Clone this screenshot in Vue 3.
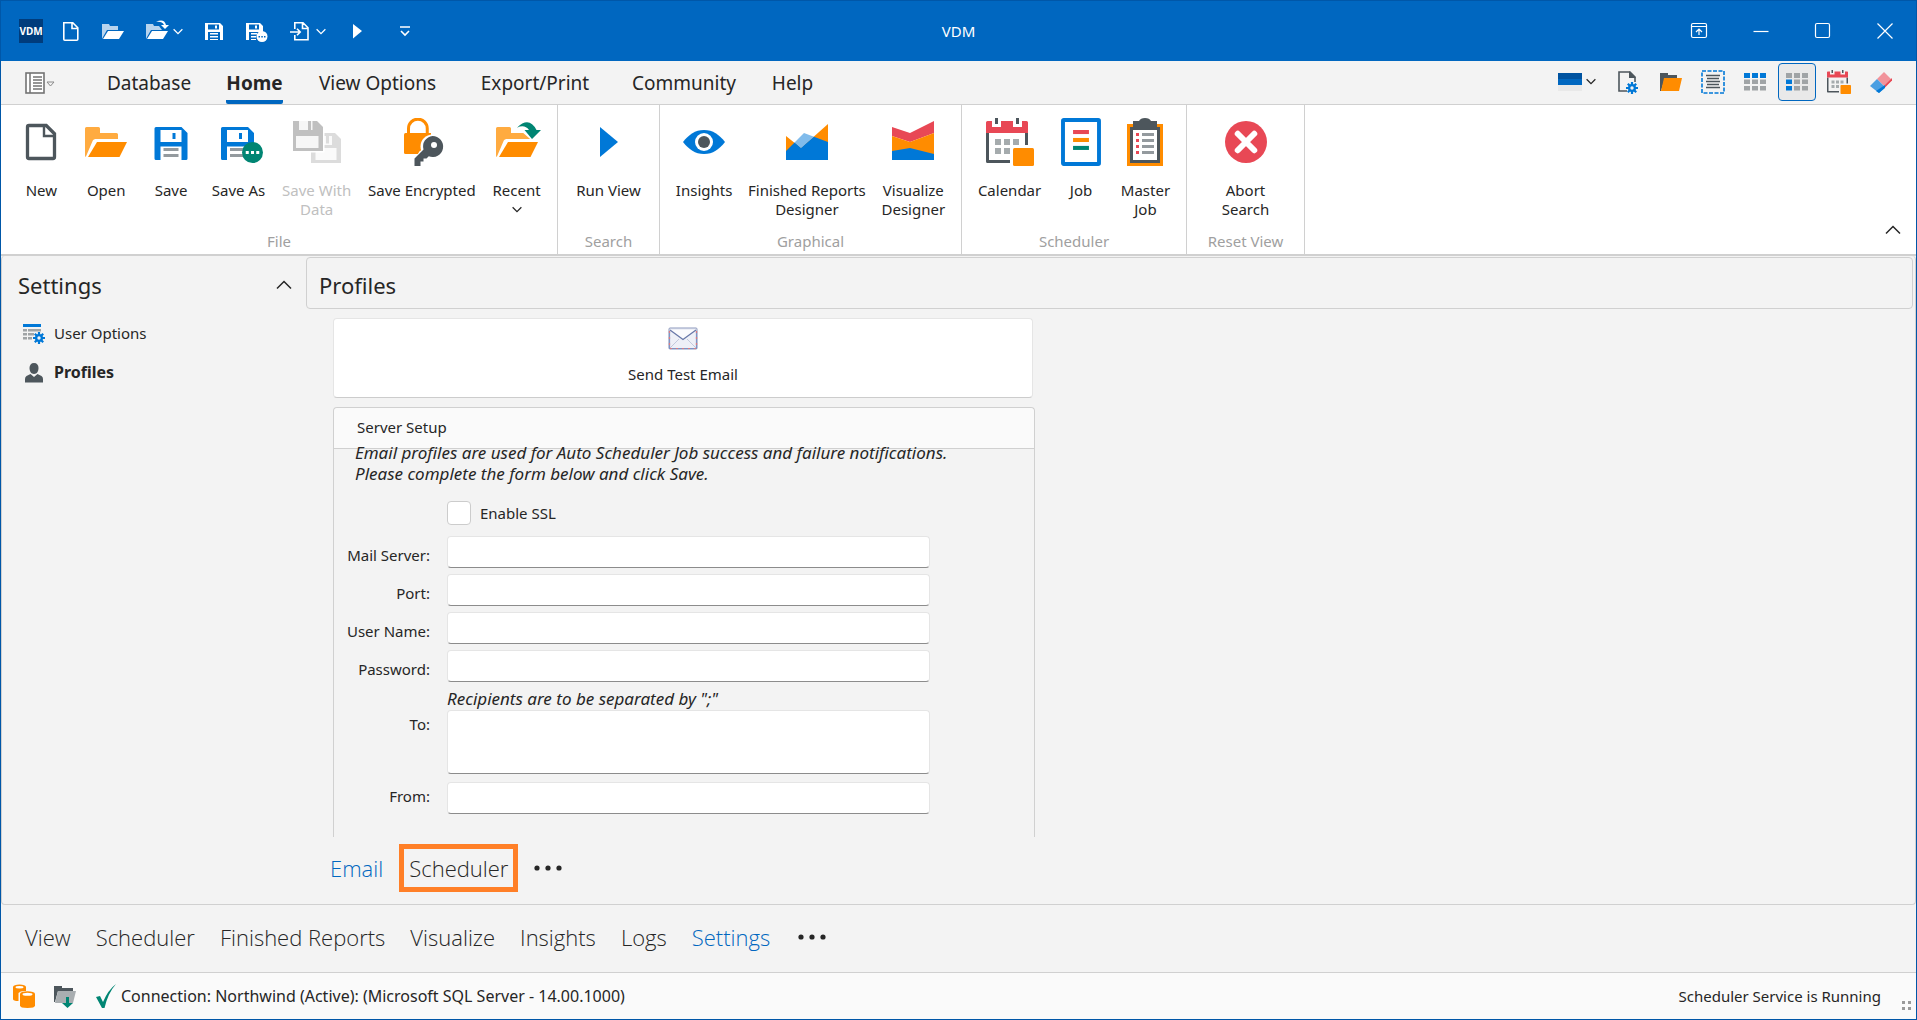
<script setup>
import { ref } from 'vue'

const tabs = [
  { label: 'Database', width: 118 },
  { label: 'Home', width: 93, active: true },
  { label: 'View Options', width: 153 },
  { label: 'Export/Print', width: 162 },
  { label: 'Community', width: 136 },
  { label: 'Help', width: 81 },
]

const groups = [
  {
    name: 'File',
    width: 557,
    items: [
      { lines: ['New'], icon: 'new' },
      { lines: ['Open'], icon: 'open' },
      { lines: ['Save'], icon: 'save' },
      { lines: ['Save As'], icon: 'save-as' },
      { lines: ['Save With', 'Data'], icon: 'save-data', disabled: true },
      { lines: ['Save Encrypted'], icon: 'encrypted' },
      { lines: ['Recent'], icon: 'recent', menu: true },
    ],
  },
  { name: 'Search', width: 102, items: [{ lines: ['Run View'], icon: 'run' }] },
  {
    name: 'Graphical',
    width: 302,
    items: [
      { lines: ['Insights'], icon: 'eye' },
      { lines: ['Finished Reports', 'Designer'], icon: 'report' },
      { lines: ['Visualize', 'Designer'], icon: 'visualize' },
    ],
  },
  {
    name: 'Scheduler',
    width: 225,
    items: [
      { lines: ['Calendar'], icon: 'calendar' },
      { lines: ['Job'], icon: 'job' },
      { lines: ['Master', 'Job'], icon: 'master' },
    ],
  },
  { name: 'Reset View', width: 118, items: [{ lines: ['Abort', 'Search'], icon: 'abort' }] },
]

const tools = [
  { icon: 'page-gear', label: 'Page settings' },
  { icon: 'folder', label: 'Folder' },
  { icon: 'select-list', label: 'Select all' },
  { icon: 'grid-top', label: 'Header row' },
  { icon: 'grid-left', label: 'First column', active: true },
  { icon: 'calendar', label: 'Calendar' },
  { icon: 'eraser', label: 'Clear' },
]

const sections = ['View', 'Scheduler', 'Finished Reports', 'Visualize', 'Insights', 'Logs', 'Settings']

const fields = [
  { id: 'server', label: 'Mail Server:', type: 'text' },
  { id: 'port', label: 'Port:', type: 'text' },
  { id: 'user', label: 'User Name:', type: 'text' },
  { id: 'password', label: 'Password:', type: 'password' },
]

const form = ref({ ssl: false, server: '', port: '', user: '', password: '', to: '', from: '' })
</script>

<template>
  <div class="window">
    <svg class="sprite" aria-hidden="true">
      <symbol id="new" viewBox="0 0 32 32">
        <path d="M8 5h11.500l5.500 5.500V26a1 1 0 0 1-1 1H8a1 1 0 0 1-1-1V6a1 1 0 0 1 1-1z" fill="none" stroke="#4d565c" stroke-width="2.200" />
        <path d="M18 5v7h7" fill="none" stroke="#4d565c" stroke-width="1.600" />
      </symbol>
      <symbol id="open" viewBox="0 0 32 32">
        <path d="M3 6h8a1 1 0 0 1 1 1v3h11a1 1 0 0 1 1 1v3H9a2 2 0 0 0-1.800 1L2.500 26H3a1 1 0 0 1-1-1V7a1 1 0 0 1 1-1z" fill="#ffab40" />
        <path d="M10 16h20l-5 10H4z" fill="#ff8c00" />
      </symbol>
      <symbol id="save" viewBox="0 0 32 32">
        <path d="M6 6h17l4 4v17a1 1 0 0 1-1 1h-3v-9H9v9H6a1 1 0 0 1-1-1V7a1 1 0 0 1 1-1zm3 2v8h14V8z" fill="#0078d7" fill-rule="evenodd" />
        <path d="M17 10h2v4h-2z" fill="#0078d7" />
        <path d="M11 20h10v2H11zM11 24h10v2H11z" fill="#949a9e" />
      </symbol>
      <symbol id="save-as" viewBox="0 0 32 32">
        <path d="M5 6h17l4 4v17a1 1 0 0 1-1 1h-3v-9H8v9H5a1 1 0 0 1-1-1V7a1 1 0 0 1 1-1zm3 2v8h14V8z" fill="#0078d7" fill-rule="evenodd" />
        <path d="M16 10h2v4h-2z" fill="#0078d7" />
        <path d="M10 20h10v2H10zM10 24h10v2H10z" fill="#949a9e" />
        <circle cx="25" cy="23" r="7" fill="#008573" />
        <path d="M20.500 22h2v2h-2zM24 22h2v2h-2zM27.500 22h2v2h-2z" fill="#fff" />
      </symbol>
      <symbol id="save-data" viewBox="0 0 32 32">
        <path d="M12 10h16l4 4v16H12z" fill="#dcdcdc" />
        <path d="M15 20h14v8H15zM16 12h10v6H16z" fill="#fafafa" />
        <path d="M22 12h2v5h-2z" fill="#dcdcdc" />
        <path d="M0 1h17l4 4v18H0z" fill="#fff" />
        <path d="M0 2h16l4 4v16H0z" fill="#c0c0c0" />
        <path d="M2 12h15v8H2zM4 2h9v6H4z" fill="#f6f6f6" />
        <path d="M10 2h2v6h-2z" fill="#c0c0c0" />
      </symbol>
      <symbol id="encrypted" viewBox="0 0 32 32">
        <path d="M7 11V7a6 6 0 0 1 12.500 0v4" fill="none" stroke="#ff8c00" stroke-width="2" />
        <path d="M5 10h17v14H5a1 1 0 0 1-1-1V11a1 1 0 0 1 1-1z" fill="#ff8c00" />
        <circle cx="23" cy="19" r="8" fill="#fff" />
        <path d="M14.500 22l4-2 2 5-8 6v-6z" fill="#fff" />
        <path d="M23 12a7 7 0 1 1-2.500 13.500L19 27h-2v2h-2v3h-4v-5l6-6A7 7 0 0 1 23 12z" fill="#4d565c" />
        <circle cx="24" cy="18" r="2" fill="#fff" />
      </symbol>
      <symbol id="recent" viewBox="0 0 32 32">
        <path d="M3 6h8a1 1 0 0 1 1 1v3h9l4 4H9a2 2 0 0 0-1.800 1L2.500 26H3a1 1 0 0 1-1-1V7a1 1 0 0 1 1-1z" fill="#ffab40" />
        <path d="M10 16h20l-5 10H4z" fill="#ff8c00" />
        <path d="M15 9l2-4 4-2 8 5h3l-6 7-7-6z" fill="#fff" />
        <path d="M16 6.500q8-8 13 1.500h3l-6 6-5-6h3q-3-4-8-1.500z" fill="#008573" />
      </symbol>
      <symbol id="run" viewBox="0 0 32 32"><path d="M10 6l12 10-12 10z" fill="#0078d7" /></symbol>
      <symbol id="eye" viewBox="0 0 32 32">
        <path d="M2 16c4-5 8-8 14-8s10 3 14 8c-4 5-8 8-14 8S6 21 2 16z" fill="#0078d7" />
        <circle cx="16" cy="16" r="6" fill="#fff" /><circle cx="16" cy="16" r="4" fill="#4d565c" />
      </symbol>
      <symbol id="report" viewBox="0 0 32 32">
        <path d="M2 12l10 8L30 4v24H2z" fill="#ff8c00" />
        <path d="M7.700 16.300L14 10l6.600 2.500L12 20z" fill="#80bbeb" />
        <path d="M2 22l5.700-5.700L12 20l8.600-7.500L30 16v12H2z" fill="#0078d7" />
      </symbol>
      <symbol id="visualize" viewBox="0 0 32 32">
        <path d="M2 6l12 4 16-8v8l-16 6-12-4z" fill="#e84855" />
        <path d="M2 12l12 4 16-6v16H2z" fill="#ff8c00" />
        <path d="M2 22l12-2 16 4v4H2z" fill="#0078d7" />
      </symbol>
      <symbol id="calendar" viewBox="0 0 32 32">
        <path d="M0 10h2v18h14v2H1a1 1 0 0 1-1-1zM26 10h2v8h-2z" fill="#4d565c" />
        <path d="M1 2h3v4h6V2h8v4h6V2h3a1 1 0 0 1 1 1v7H0V3a1 1 0 0 1 1-1z" fill="#e84855" />
        <path d="M6 0h2v4H6zM20 0h2v4h-2z" fill="#4d565c" />
        <path d="M6 14h4v4H6zM12 14h4v4h-4zM18 14h4v4h-4zM6 20h4v4H6zM12 20h4v4h-4z" fill="#a5abad" />
        <rect x="18" y="20" width="14" height="12" rx="1" fill="#ff8c00" />
      </symbol>
      <symbol id="job" viewBox="0 0 32 32">
        <rect x="4" y="1.300" width="24" height="29.400" rx=".5" fill="#fff" stroke="#0078d7" stroke-width="2.600" />
        <path d="M10.700 8h10.600v2.700H10.700z" fill="#e84855" />
        <path d="M10.700 13.300h10.600V16H10.700z" fill="#ff8c00" />
        <path d="M10.700 18.600h10.600v2.700H10.700z" fill="#008573" />
      </symbol>
      <symbol id="master" viewBox="0 0 32 32">
        <path d="M4 4h24v28H4z" fill="#ff8c00" />
        <path d="M6 6h20v24H6z" fill="#4d565c" />
        <path d="M8 8h16v20H8z" fill="#fff" />
        <path d="M8 2h4q1-2 4-2t4 2h4v6H8z" fill="#4d565c" />
        <path d="M10 10h2v2h-2zM10 14h2v2h-2zM10 18h2v2h-2zM10 22h2v2h-2z" fill="#e84855" />
        <path d="M14 10h8v2h-8zM14 14h8v2h-8zM14 18h8v2h-8zM14 22h8v2h-8z" fill="#949a9e" />
      </symbol>
      <symbol id="abort" viewBox="0 0 32 32">
        <circle cx="16" cy="16" r="14" fill="#e84855" />
        <path d="M10.500 10.500l11 11M21.500 10.500l-11 11" stroke="#fff" stroke-width="4" stroke-linecap="round" />
      </symbol>
      <symbol id="gear" viewBox="0 0 12 12">
        <path d="M6 0v12M0 6h12M1.800 1.800l8.400 8.400M10.200 1.800l-8.400 8.400" stroke="#0078d7" stroke-width="2.200" />
        <circle cx="6" cy="6" r="4" fill="#0078d7" /><circle cx="6" cy="6" r="1.700" fill="#f3f3f3" />
      </symbol>
      <symbol id="page-gear" viewBox="0 0 24 24">
        <path d="M10 21H2V2h11l5 5v5" fill="none" stroke="#4d565c" stroke-width="1.600" />
        <path d="M12 1l7 7h-7z" fill="#4d565c" />
        <use href="#gear" x="9" y="12" width="12" height="12" />
      </symbol>
      <symbol id="folder" viewBox="0 0 24 24">
        <path d="M1 3h8v2h9v3H6L2 21H1z" fill="#4d565c" />
        <path d="M5 8h18l-3 13H2z" fill="#ff8c00" />
      </symbol>
      <symbol id="select-list" viewBox="0 0 24 24">
        <rect x="1" y="1" width="22" height="22" fill="none" stroke="#0078d7" stroke-width="1.600" stroke-dasharray="4 1.500" />
        <path d="M5 5.500h14M6 8.500h12M5 11.500h14M6 14.500h12M5 17.500h14" stroke="#4d565c" stroke-width="1.400" />
      </symbol>
      <symbol id="grid-top" viewBox="0 0 24 24">
        <path d="M1 3h6v5H1zM9 3h6v5H9zM17 3h6v5h-6z" fill="#0078d7" />
        <path d="M1 9.500h6v4.500H1zM9 9.500h6v4.500H9zM17 9.500h6v4.500h-6zM1 16h6v4.500H1zM9 16h6v4.500H9zM17 16h6v4.500h-6z" fill="#a0a4a6" />
      </symbol>
      <symbol id="grid-left" viewBox="0 0 24 24">
        <path d="M1 3h6v5H1zM9 3h6v5H9zM17 3h6v5h-6zM9 9.500h6v4.500H9zM17 9.500h6v4.500h-6zM9 16h6v4.500H9zM17 16h6v4.500h-6z" fill="#a0a4a6" />
        <path d="M1 9.500h6v4.500H1zM1 16h6v4.500H1z" fill="#0078d7" />
      </symbol>
      <symbol id="eraser" viewBox="0 0 24 24">
        <path d="M15 2l8 8-7 7-8-8z" fill="#f1939b" />
        <path d="M23 8v2.500l-7 7V15z" fill="#e84855" />
        <path d="M8 9l8 8-6 6-9-7z" fill="#4a9fe2" />
        <path d="M16 15v3l-6 5-3-2z" fill="#0078d7" />
      </symbol>
      <symbol id="options" viewBox="0 0 24 24">
        <path d="M1 2h18v3H1z" fill="#0078d7" />
        <path d="M1 7h4v2.500H1zM6 7h13v2.500H6zM1 11h4v2.500H1zM6 11h6v2.500H6zM1 15h4v2.500H1zM6 15h4v2.500H6z" fill="#a0a4a6" />
        <use href="#gear" x="11" y="10" width="12" height="12" />
      </symbol>
      <symbol id="person" viewBox="0 0 24 24">
        <path d="M12 2c3 0 4.500 2 4.500 5 0 3-1.500 6-4.500 6S7.500 10 7.500 7c0-3 1.500-5 4.500-5z" fill="#4d565c" />
        <path d="M8.500 13l3.500 3 3.500-3 4 2q1.500 .800 1.500 3v3.500H3V18q0-2.200 1.500-3z" fill="#4d565c" />
      </symbol>
      <symbol id="chevron" viewBox="0 0 16 10"><path d="M1 1.500L8 8.500l7-7" fill="none" stroke="currentColor" stroke-width="2" /></symbol>
      <symbol id="chevron-up" viewBox="0 0 16 10"><path d="M1 8.500L8 1.500l7 7" fill="none" stroke="currentColor" stroke-width="1.500" /></symbol>
      <symbol id="q-new" viewBox="0 0 24 24"><path d="M4.800 3.800h9l5 5v11.400a1 1 0 0 1-1 1h-12a1 1 0 0 1-1-1zM13 4v5.500h5.500" fill="none" stroke="#fff" stroke-width="1.600" /></symbol>
      <symbol id="q-open" viewBox="0 0 24 24">
        <path d="M1 5h7l1 2h8v4H6L2 18l-1 2z" fill="#b8d4ee" /><path d="M7 12h16l-5 8H2z" fill="#fff" />
      </symbol>
      <symbol id="q-recent" viewBox="0 0 24 24">
        <path d="M1 5h7l1 2h5l3 4H6L2 18l-1 2z" fill="#b8d4ee" /><path d="M7 12h16l-5 8H2z" fill="#fff" />
        <path d="M11 3q8-4 10 3h3l-4 4-4-4h3q-2-4-8-3z" fill="#fff" />
      </symbol>
      <symbol id="q-save" viewBox="0 0 24 24">
        <path d="M3 4h15l3 3v14h-3v-8H6v8H3zm3 1.500v5h11v-5z" fill="#fff" fill-rule="evenodd" /><path d="M13 6.500h2v3h-2zM8 14h8v1.500H8zM8 17h8v1.500H8zM8 20h8v1H8z" fill="#fff" />
      </symbol>
      <symbol id="q-save-as" viewBox="0 0 24 24">
        <path d="M2 4h14l3 3v7h-3v-1H5v8H2zm3 1.500v5h10v-5z" fill="#fff" fill-rule="evenodd" /><path d="M11 6.500h2v3h-2zM7 14h6v1.500H7zM7 17h5v1.500H7zM7 20h5v1H7z" fill="#fff" />
        <circle cx="18" cy="17.500" r="5.500" fill="#fff" /><path d="M14.500 17h1.500v1.500h-1.500zM17.300 17h1.500v1.500h-1.500zM20 17h1.500v1.500H20z" fill="#0067c0" />
      </symbol>
      <symbol id="q-export" viewBox="0 0 24 24">
        <path d="M6.800 10V3.800H15l5 5v12H6.800V16M14.500 4v5.500h5.200M2 13h10M9 9.800l3.200 3.200L9 16.200" fill="none" stroke="#fff" stroke-width="1.600" />
      </symbol>
      <symbol id="q-run" viewBox="0 0 24 24"><path d="M8 5l9 7-9 7.500z" fill="#fff" /></symbol>
      <symbol id="q-more" viewBox="0 0 24 24"><path d="M7 8h10M8 12l4 4 4-4" fill="none" stroke="#fff" stroke-width="1.600" /></symbol>
      <symbol id="database" viewBox="0 0 24 24">
        <path d="M1 3v12q0 2 5.500 2V9q2-2.500 7.500-2V3z" fill="#ff8c00" /><ellipse cx="7.500" cy="3" rx="6.500" ry="2.500" fill="#ff8c00" /><ellipse cx="7.500" cy="3.200" rx="4" ry="1.200" fill="#fff" />
        <path d="M8 10v11.500q0 2.500 7.500 2.500t7.500-2.500V10z" fill="#ff8c00" /><ellipse cx="15.500" cy="10" rx="7.500" ry="2.700" fill="#ff8c00" /><ellipse cx="15.500" cy="10.300" rx="5" ry="1.500" fill="#fff" />
      </symbol>
      <symbol id="folder-down" viewBox="0 0 24 24">
        <path d="M1 2h8v2h11v3H5L2 18H1z" fill="#4d565c" /><path d="M5 7h18l-3 12H2z" fill="#a9aeb1" />
        <path d="M13 13h3v6h4l-5.500 5-5.500-5h4z" fill="#008573" />
      </symbol>
      <symbol id="check" viewBox="0 0 24 24"><path d="M2 13l4-1 3 6Q14 6 22 0 14 9 10.500 24H8z" fill="#008573" /></symbol>
      <symbol id="dots" viewBox="0 0 28 6"><circle cx="3" cy="3" r="2.600" /><circle cx="14" cy="3" r="2.600" /><circle cx="25" cy="3" r="2.600" /></symbol>
    </svg>

    <header class="titlebar">
      <div class="quick">
        <span class="logo">VDM</span>
        <button aria-label="New"><svg><use href="#q-new" /></svg></button>
        <button aria-label="Open"><svg><use href="#q-open" /></svg></button>
        <button class="split" aria-label="Recent"><svg><use href="#q-recent" /></svg><svg class="caret"><use href="#chevron" /></svg></button>
        <button aria-label="Save"><svg><use href="#q-save" /></svg></button>
        <button aria-label="Save As"><svg><use href="#q-save-as" /></svg></button>
        <button class="split" aria-label="Export"><svg><use href="#q-export" /></svg><svg class="caret"><use href="#chevron" /></svg></button>
        <button aria-label="Run"><svg><use href="#q-run" /></svg></button>
        <button aria-label="Customize"><svg><use href="#q-more" /></svg></button>
      </div>
      <h1>VDM</h1>
      <div class="controls">
        <button aria-label="Ribbon display"><svg viewBox="0 0 18 18"><rect x="1.500" y="1.500" width="15" height="14" rx="1.500" /><path d="M1.500 4.500h15M9 13V7.500M6 10l3-3 3 3" /></svg></button>
        <button aria-label="Minimize"><svg viewBox="0 0 18 18"><path d="M1.500 9.500h15" /></svg></button>
        <button aria-label="Maximize"><svg viewBox="0 0 18 18"><rect x="1.500" y="1.500" width="14" height="14" rx="1.500" /></svg></button>
        <button aria-label="Close"><svg viewBox="0 0 18 18"><path d="M1.500 1.500l15 15M16.500 1.500l-15 15" /></svg></button>
      </div>
    </header>

    <nav class="tabs">
      <button class="file-menu" aria-label="File menu">
        <svg viewBox="0 0 32 22"><rect x="1" y="1" width="18" height="20" fill="#fff" stroke="#737373" stroke-width="1.600" /><path d="M5 1v20" stroke="#737373" stroke-width="1.500" /><path d="M8 5h9M8 8h9M8 11h9M8 14h9M8 17h9" stroke="#737373" stroke-width="1.300" /><path d="M22 10h7l-3.500 4z" fill="none" stroke="#8a8a8a" /></svg>
      </button>
      <button v-for="t in tabs" :key="t.label" class="tab" :class="{ active: t.active }" :style="{ width: t.width + 'px' }"><span>{{ t.label }}</span></button>
      <div class="tools">
        <button class="theme" aria-label="Theme">
          <svg class="swatch" viewBox="0 0 24 18"><path d="M0 0h24v6H0z" fill="#0053a0" /><path d="M0 6h24v6H0z" fill="#0067c0" /><path d="M0 12h24v6H0z" fill="#e9e9e9" /></svg>
          <svg class="caret"><use href="#chevron" /></svg>
        </button>
        <button v-for="t in tools" :key="t.icon" class="tool" :class="{ active: t.active }" :aria-label="t.label"><svg><use :href="'#' + t.icon" /></svg></button>
      </div>
    </nav>

    <section class="ribbon">
      <div v-for="g in groups" :key="g.name" class="group" :style="{ width: g.width + 'px' }">
        <div class="items">
          <button v-for="i in g.items" :key="i.icon" class="item" :disabled="i.disabled">
            <svg class="big"><use :href="'#' + i.icon" /></svg>
            <span v-for="l in i.lines" :key="l">{{ l }}</span>
            <svg v-if="i.menu" class="caret"><use href="#chevron" /></svg>
          </button>
        </div>
        <div class="group-name">{{ g.name }}</div>
      </div>
      <button class="collapse" aria-label="Collapse ribbon"><svg><use href="#chevron-up" /></svg></button>
    </section>

    <main class="page">
      <aside>
        <div class="aside-head"><h2>Settings</h2><button aria-label="Collapse"><svg><use href="#chevron-up" /></svg></button></div>
        <a href="#options"><svg><use href="#options" /></svg>User Options</a>
        <a href="#profiles" class="current"><svg><use href="#person" /></svg>Profiles</a>
      </aside>
      <div class="content">
        <h2 class="content-head">Profiles</h2>
        <button class="send">
          <svg viewBox="0 0 30 23"><rect x="1" y="1" width="28" height="21" rx="1" fill="#eef0f7" stroke="#8c98bd" /><path d="M2 21l9-9M28 21l-9-9" stroke="#c3c9dc" /><path d="M2 3l13 9.500L28 3" fill="#fbfbfd" stroke="#6878a8" stroke-width="1.300" /><path d="M1.500 4v17.500h27V4" fill="none" stroke="#7f93c4" stroke-width="1.200" /><path d="M1.500 4v17.500h27V4" fill="none" stroke="#dc7b80" stroke-width="1.200" stroke-dasharray="2 4" /></svg>
          <span>Send Test Email</span>
        </button>
        <form class="setup" @submit.prevent>
          <h3>Server Setup</h3>
          <p class="note">Email profiles are used for Auto Scheduler Job success and failure notifications.<br />Please complete the form below and click Save.</p>
          <label class="ssl"><input v-model="form.ssl" type="checkbox" />Enable SSL</label>
          <div v-for="f in fields" :key="f.id" class="field">
            <label :for="f.id">{{ f.label }}</label><input :id="f.id" v-model="form[f.id]" :type="f.type" />
          </div>
          <p class="hint">Recipients are to be separated by ";"</p>
          <div class="field raised"><label for="to">To:</label><textarea id="to" v-model="form.to"></textarea></div>
          <div class="field raised"><label for="from">From:</label><input id="from" v-model="form.from" type="text" /></div>
        </form>
        <nav class="subtabs">
          <a href="#email" class="current">Email</a>
          <a href="#scheduler" class="marked">Scheduler</a>
          <button aria-label="More"><svg><use href="#dots" /></svg></button>
        </nav>
      </div>
    </main>

    <nav class="sections">
      <a v-for="s in sections" :key="s" :href="'#' + s.toLowerCase().replace(' ', '-')" :class="{ current: s === 'Settings' }">{{ s }}</a>
      <button aria-label="More"><svg><use href="#dots" /></svg></button>
    </nav>

    <footer class="status">
      <svg><use href="#database" /></svg><svg><use href="#folder-down" /></svg><svg class="ok"><use href="#check" /></svg>
      <span class="connection">Connection: Northwind (Active): (Microsoft SQL Server - 14.00.1000)</span>
      <span class="service">Scheduler Service is Running</span>
      <svg class="grip" viewBox="0 0 10 10"><path d="M0 0h3v3H0zM6 0h3v3H6zM0 6h3v3H0zM6 6h3v3H6z" fill="#9a9a9a" /></svg>
    </footer>
  </div>
</template>

<style>
body { margin: 0; background: #f3f3f3; }
</style>

<style scoped>
* { box-sizing: border-box; }
.window { display: flex; flex-direction: column; min-height: 100vh; border: 1px solid #0057a8; background: #f3f3f3; color: #262626; font: 15px/19px "Noto Sans", "Open Sans", sans-serif; }
.sprite { position: absolute; width: 0; height: 0; }
svg { display: block; flex: none; }
button { display: flex; align-items: center; justify-content: center; margin: 0; padding: 0; border: 0; background: none; color: inherit; font: inherit; }
a { color: inherit; text-decoration: none; }
h1, h2, h3, p { margin: 0; font-weight: 400; }
.caret { width: 10px; height: 7px; }

.titlebar { display: grid; grid-template-columns: 1fr auto 1fr; align-items: center; height: 60px; background: #0067c0; color: #fff; }
.titlebar h1 { font-size: 15px; }
.quick { display: flex; align-items: center; padding-left: 18px; }
.logo { width: 24px; height: 24px; margin-right: 7px; background: #003c7c; font: 700 10px/24px "Noto Sans", sans-serif; text-align: center; }
.quick button { width: 42px; height: 42px; }
.quick .split { width: 59px; gap: 4px; }
.quick button svg:first-child { width: 24px; height: 24px; }
.quick button:last-child { margin-left: 6px; }
.controls { display: flex; justify-content: flex-end; }
.controls button { width: 62px; height: 60px; }
.controls svg { width: 18px; height: 18px; fill: none; stroke: #fff; stroke-width: 1.2; }

.tabs { display: flex; height: 44px; border-bottom: 1px solid #d0d0d0; font-size: 19px; line-height: 26px; }
.file-menu { width: 89px; padding-left: 24px; justify-content: flex-start; }
.file-menu svg { width: 32px; height: 22px; }
.tab span { height: 43px; padding-top: 9px; border-bottom: 4px solid transparent; border-radius: 2px; white-space: nowrap; }
.active span { border-color: #0067c0; font-weight: 700; }
.tools { display: flex; gap: 4px; align-items: center; margin-left: auto; padding: 0 16px 2px 0; }
.tool { width: 38px; height: 38px; border-radius: 4px; }
.tool svg { width: 24px; height: 24px; }
.tool.active { border: 1px solid #0067c0; background: #e9e9e9; }
.theme { gap: 4px; margin-right: 10px; }
.swatch { width: 24px; height: 18px; }

.ribbon { display: flex; height: 151px; border-bottom: 2px solid #d0d0d0; background: #fff; }
.group { display: flex; flex: none; flex-direction: column; justify-content: space-between; padding: 13px 8px 3px; border-right: 1px solid #d0d0d0; }
.items { display: flex; justify-content: center; }
.item { flex: 1 1 auto; flex-direction: column; justify-content: flex-start; min-width: 63px; padding: 0 7px; white-space: nowrap; }
.item:disabled { color: #c0c0c0; }
.big { width: 48px; height: 48px; margin-bottom: 15px; }
.item .caret { margin-top: 6px; }
.group-name { color: #a0a0a0; text-align: center; }
.collapse { align-self: flex-end; width: 40px; height: 48px; margin: 0 3px 0 auto; }
.collapse svg, .aside-head svg { width: 16px; height: 10px; }

.page { display: flex; flex: 1; border: 1px solid #d0d0d0; border-top: 0; border-radius: 4px; }
aside { width: 304px; flex: none; }
.aside-head { display: flex; align-items: center; justify-content: space-between; height: 58px; padding: 0 14px 0 16px; }
h2 { font-size: 22px; line-height: 30px; }
aside a { display: flex; align-items: center; gap: 8px; height: 39px; padding-left: 20px; }
aside a svg { width: 24px; height: 24px; }
aside .current { font-size: 16px; font-weight: 700; }
.content { display: flex; flex: 1; flex-direction: column; }
.content-head { height: 52px; margin: 1px 2px 9px 0; padding: 12px; border: 1px solid #d0d0d0; border-radius: 4px; }
.send { flex-direction: column; gap: 15px; width: 700px; height: 80px; margin-left: 27px; padding-bottom: 5px; border: 1px solid #e5e5e5; border-bottom-color: #ccc; border-radius: 4px; background: #fff; }
.send svg { width: 30px; height: 23px; }
.setup { display: flex; flex: 1; flex-direction: column; gap: 6px; width: 702px; margin: 9px 0 0 27px; padding-bottom: 21px; border: 1px solid #d0d0d0; border-bottom: 0; border-radius: 4px 4px 0 0; }
h3 { height: 41px; padding: 10px 23px; border-bottom: 1px solid #d0d0d0; border-radius: 4px 4px 0 0; background: #fafafa; font-size: 15px; }
.note, .hint { font-size: 17px; font-style: italic; line-height: 21px; }
.note { margin: -13px 0 11px; padding-left: 21px; }
.ssl { display: flex; align-items: center; gap: 9px; margin: 0 0 5px 113px; }
input, textarea { width: 483px; height: 32px; margin: 0; padding: 4px 8px; border: 1px solid #e5e5e5; border-bottom-color: #8c8c8c; border-radius: 4px; background: #fff; font: inherit; resize: none; }
.ssl input { width: 24px; height: 24px; border-color: #ccc; appearance: none; }
.field { display: flex; gap: 17px; }
.field label { width: 96px; padding-top: 10px; text-align: right; white-space: nowrap; }
.raised label { padding-top: 5px; }
.hint { margin: 0 0 -5px 113px; }
textarea { height: 64px; margin-bottom: 2px; }

.subtabs, .sections { display: flex; align-items: center; font: 300 22px/30px "Open Sans", "Noto Sans", sans-serif; }
.subtabs { gap: 16px; height: 67px; padding: 0 0 5px 24px; }
.sections { gap: 25px; height: 67px; padding: 0 0 3px 24px; }
.sections .current, .subtabs .current { color: #0067c0; }
.marked { padding: 4px 5px; border: 5px solid #ff7f27; }
.subtabs svg, .sections svg { width: 28px; height: 6px; fill: #262626; }
.sections button { margin-left: 3px; }

.status { display: flex; align-items: center; height: 47px; padding: 0 4px 0 11px; border-top: 1px solid #d0d0d0; background: #fafafa; }
.status svg { width: 24px; height: 24px; margin-right: 17px; }
.status .ok { margin-right: 3px; }
.connection { font-size: 16px; }
.status .service { margin-left: auto; }
.status .grip { width: 10px; height: 10px; align-self: flex-end; margin: 0 0 8px 21px; }
</style>
